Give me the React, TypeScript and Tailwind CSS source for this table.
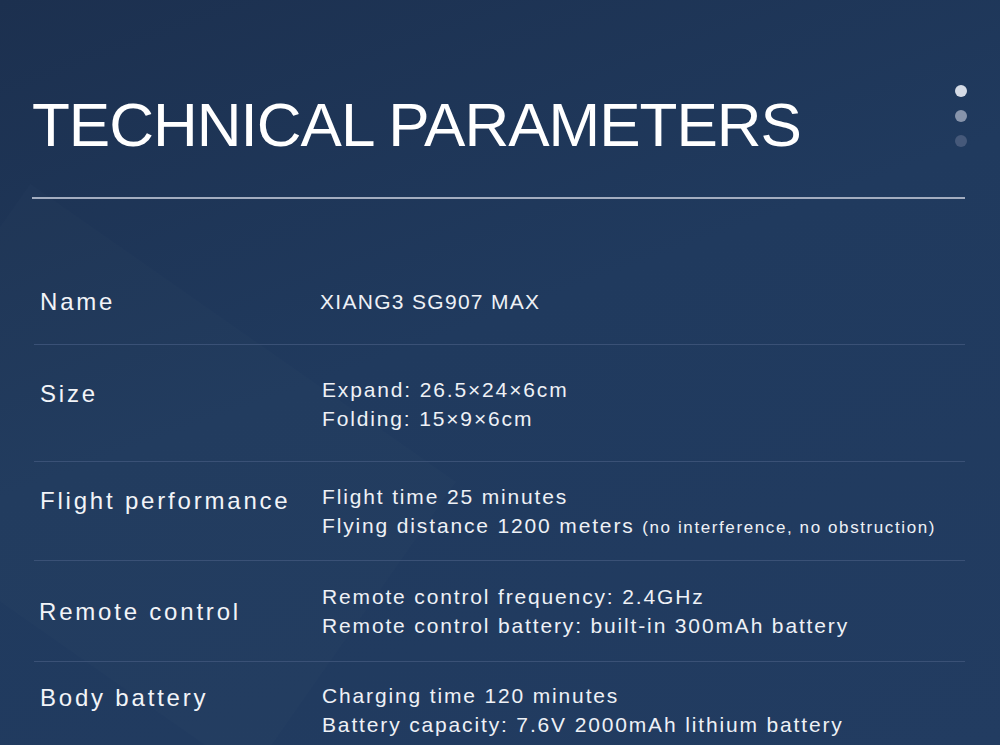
import React from "react";

type Row = {
  label: string;
  lines: React.ReactNode[];
  rowCls: string;
  labelCls: string;
  valueCls: string;
};

const rows: Row[] = [
  {
    label: "Name",
    lines: ["XIANG3 SG907 MAX"],
    rowCls: "h-[85px] pt-[27px] border-b",
    labelCls: "mt-0 pl-[6px]",
    valueCls: "mt-[1px] pl-[0px] tracking-[1.3px]",
  },
  {
    label: "Size",
    lines: ["Expand: 26.5×24×6cm", "Folding: 15×9×6cm"],
    rowCls: "h-[117px] pt-[31px] border-b",
    labelCls: "mt-[3px] pl-[6px]",
    valueCls: "pl-[2px] tracking-[1.85px]",
  },
  {
    label: "Flight performance",
    lines: [
      "Flight time 25 minutes",
      <>
        Flying distance 1200 meters{" "}
        <span className="text-[17px] tracking-[1.6px]">(no interference, no obstruction)</span>
      </>,
    ],
    rowCls: "h-[99px] pt-[21px] border-b",
    labelCls: "mt-[3px] pl-[6px]",
    valueCls: "pl-[2px] tracking-[1.85px]",
  },
  {
    label: "Remote control",
    lines: ["Remote control frequency: 2.4GHz", "Remote control battery: built-in 300mAh battery"],
    rowCls: "h-[101px] pt-[22px] border-b",
    labelCls: "mt-[14px] pl-[5px]",
    valueCls: "pl-[2px] tracking-[1.85px]",
  },
  {
    label: "Body battery",
    lines: ["Charging time 120 minutes", "Battery capacity: 7.6V 2000mAh lithium battery"],
    rowCls: "h-[84px] pt-[20px]",
    labelCls: "mt-[1px] pl-[6px]",
    valueCls: "pl-[2px] tracking-[1.85px]",
  },
];

export default function App() {
  return (
    <div
      className="relative w-[1000px] h-[745px] overflow-hidden bg-[#1f3456] text-white"
      style={{ fontFamily: '"Liberation Sans", Arial, sans-serif' }}
    >
      <div className="absolute inset-0 bg-[linear-gradient(160deg,#1c304f_0%,#203a5e_45%,#223c61_100%)]" />
      <div className="absolute left-[-120px] top-[300px] w-[520px] h-[360px] rotate-[35deg] bg-[#ffffff] opacity-[0.012]" />
      <div className="absolute right-[33px] top-[85px] flex flex-col gap-[13px]">
        <div className="w-[12px] h-[12px] rounded-full bg-[#d5dbe6]" />
        <div className="w-[12px] h-[12px] rounded-full bg-[#8794ab]" />
        <div className="w-[12px] h-[12px] rounded-full bg-[#46597a]" />
      </div>
      <div className="relative pl-[32px] pt-[90px] pr-[35px]">
        <h1 className="text-[62px] leading-[70px] tracking-[-1px] font-normal">TECHNICAL PARAMETERS</h1>
        <div className="mt-[37px] h-[2px] bg-[#a3adc0]" />
        <div className="mt-[61px] pl-[2px]">
          {rows.map((r, i) => (
            <div key={i} className={`flex items-start border-[#3a5176] ${r.rowCls}`}>
              <div
                className={`w-[286px] shrink-0 text-[24px] leading-[30px] tracking-[2.8px] text-[#f2f4f8] ${r.labelCls}`}
              >
                {r.label}
              </div>
              <div className={`text-[21px] leading-[28.5px] text-[#eef1f6] whitespace-nowrap ${r.valueCls}`}>
                {r.lines.map((l, j) => (
                  <div key={j}>{l}</div>
                ))}
              </div>
            </div>
          ))}
        </div>
      </div>
    </div>
  );
}
